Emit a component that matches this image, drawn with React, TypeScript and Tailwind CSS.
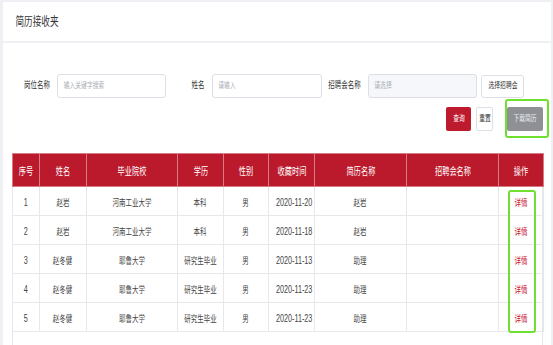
import React from "react";

function T({ children, className = "" }: { children: React.ReactNode; className?: string }) {
  return <span className={"inline-block whitespace-nowrap scale-x-[0.72] " + className}>{children}</span>;
}

const rows = [
  ["1", "赵岩", "河南工业大学", "本科", "男", "2020-11-20", "赵岩", ""],
  ["2", "赵岩", "河南工业大学", "本科", "男", "2020-11-18", "赵岩", ""],
  ["3", "赵冬健", "耶鲁大学", "研究生毕业", "男", "2020-11-13", "助理", ""],
  ["4", "赵冬健", "耶鲁大学", "研究生毕业", "男", "2020-11-23", "助理", ""],
  ["5", "赵冬健", "耶鲁大学", "研究生毕业", "男", "2020-11-23", "助理", ""],
];

const heads = ["序号", "姓名", "毕业院校", "学历", "性别", "收藏时间", "简历名称", "招聘会名称", "操作"];
const widths = ["w-[27px]", "w-[47px]", "w-[91px]", "w-[46px]", "w-[45px]", "w-[46px]", "w-[92px]", "w-[92px]", "w-[45px]"];

export default function App() {
  return (
    <div className="w-[553px] h-[345px] overflow-hidden bg-[#eef0f3] pt-[2px] pl-[3px] pr-[2px] flex flex-col font-['Liberation_Sans','Noto_Sans_CJK_SC',sans-serif]">
      <div className="h-[39px] bg-white flex items-center pl-[13px] shrink-0">
        <div className="w-[41px] flex justify-center">
          <T className="text-[12px] text-[#333]">简历接收夹</T>
        </div>
      </div>
      <div className="mt-[2px] flex-1 bg-white flex flex-col pl-[9px] pr-[8px] pt-[31px]">
        <div className="flex items-center h-[24px] pl-[12px]">
          <div className="w-[26px] flex justify-center"><T className="text-[9px] text-[#333]">岗位名称</T></div>
          <div className="ml-[7px] w-[109px] h-[24px] border border-[#dcdfe6] rounded-[3px] flex items-center pl-[5px]">
            <div className="w-[42px] flex justify-center"><T className="text-[8px] text-[#a9adb5]">输入关键字搜索</T></div>
          </div>
          <div className="ml-[25px] w-[14px] flex justify-center"><T className="text-[9px] text-[#333]">姓名</T></div>
          <div className="ml-[7px] w-[110px] h-[24px] border border-[#dcdfe6] rounded-[3px] flex items-center pl-[5px]">
            <div className="w-[18px] flex justify-center"><T className="text-[8px] text-[#a9adb5]">请输入</T></div>
          </div>
          <div className="ml-[6px] w-[32px] flex justify-center"><T className="text-[9px] text-[#333]">招聘会名称</T></div>
          <div className="ml-[8px] w-[109px] h-[24px] border border-[#dcdfe6] bg-[#f5f7fa] rounded-[3px] flex items-center pl-[5px]">
            <div className="w-[18px] flex justify-center"><T className="text-[8px] text-[#a9adb5]">请选择</T></div>
          </div>
          <div className="ml-[4px] w-[43px] h-[23px] border border-[#dcdfe6] rounded-[3px] flex items-center justify-center">
            <T className="text-[8px] text-[#333]">选择招聘会</T>
          </div>
        </div>
        <div className="mt-[9px] flex justify-end items-center h-[24px]">
          <div className="w-[25px] h-[24px] bg-[#bd1a2e] rounded-[2px] flex items-center justify-center">
            <T className="text-[8px] text-white">查询</T>
          </div>
          <div className="ml-[5px] w-[17px] h-[24px] border border-[#dcdfe6] rounded-[2px] flex items-center justify-center">
            <T className="text-[8px] text-[#333]">重置</T>
          </div>
          <div className="ml-[14px] relative">
            <div className="w-[36px] h-[24px] bg-[#8e9096] rounded-[2px] flex items-center justify-center">
              <T className="text-[8px] text-[#eceef2]">下载简历</T>
            </div>
            <div className="absolute -left-[2px] -top-[8px] w-[44px] h-[39px] border-2 border-[#6fe030] rounded-[3px]"></div>
          </div>
        </div>
        <div className="mt-[22px] flex-1 relative border-l border-r border-[#e4e6ea]">
          <table className="table-fixed border-collapse w-[531px] -ml-px">
            <colgroup>
              {widths.map((w, i) => (
                <col key={i} className={w} />
              ))}
            </colgroup>
            <thead>
              <tr className="h-[33px] bg-[#bb1a2d]">
                {heads.map((h, i) => (
                  <th key={i} className="p-0 font-normal text-center border border-[#d77b86] text-white">
                    <T className="text-[10px]">{h}</T>
                  </th>
                ))}
              </tr>
            </thead>
            <tbody>
              {rows.map((r, ri) => (
                <tr key={ri} className="h-[29px]">
                  {r.map((c, ci) => (
                    <td key={ci} className="p-0 text-center border border-[#e6e8eb] text-[#444]">
                      <T className={ci === 0 || ci === 5 ? "text-[10px]" : "text-[9px]"}>{c}</T>
                    </td>
                  ))}
                  <td className="p-0 text-center border border-[#e6e8eb] text-[#c8102e]">
                    <T className="text-[9px]">详情</T>
                  </td>
                </tr>
              ))}
            </tbody>
          </table>
          <div className="absolute left-[495px] top-[37px] w-[28px] h-[143px] border-2 border-[#6fe030] rounded-[3px]"></div>
        </div>
      </div>
    </div>
  );
}
